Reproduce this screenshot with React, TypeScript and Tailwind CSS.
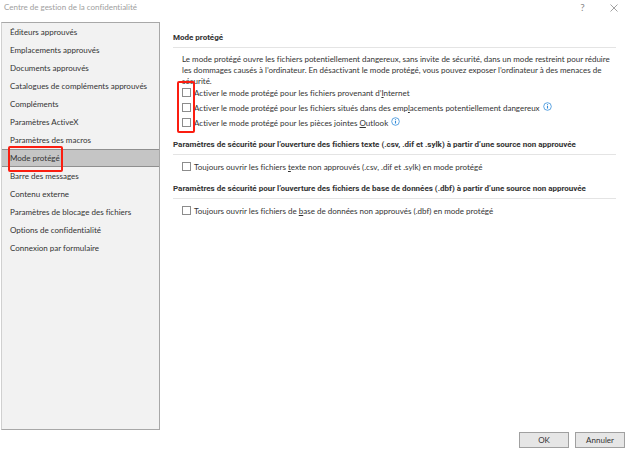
import React from 'react'

interface NavItem {
  id: string
  label: string
}

const navItems: NavItem[] = [
  { id: 'publishers', label: 'Éditeurs approuvés' },
  { id: 'locations', label: 'Emplacements approuvés' },
  { id: 'documents', label: 'Documents approuvés' },
  { id: 'catalogs', label: 'Catalogues de compléments approuvés' },
  { id: 'addins', label: 'Compléments' },
  { id: 'activex', label: 'Paramètres ActiveX' },
  { id: 'macros', label: 'Paramètres des macros' },
  { id: 'protected-view', label: 'Mode protégé' },
  { id: 'message-bar', label: 'Barre des messages' },
  { id: 'external', label: 'Contenu externe' },
  { id: 'file-block', label: 'Paramètres de blocage des fichiers' },
  { id: 'privacy', label: 'Options de confidentialité' },
  { id: 'form-login', label: 'Connexion par formulaire' },
]

const activeItem = 'protected-view'

const InfoIcon: React.FC = () => (
  <svg viewBox="0 0 18 18" className="mb-0.5 h-[9px] w-[9px] shrink-0" fill="none" stroke="#2b88d8" aria-hidden="true">
    <circle cx="9" cy="9" r="7.6" strokeWidth="1.5" />
    <path d="M9 8v5M9 4.6v2" strokeWidth="2.2" />
  </svg>
)

interface OptionProps {
  id: string
  info?: boolean
  children: React.ReactNode
}

/** Checkbox row with an underlined access key in its label */
const Option: React.FC<OptionProps> = ({ id, info, children }) => (
  <div className="flex h-[15px] items-center gap-[3px]">
    <input
      id={id}
      type="checkbox"
      className="h-[9px] w-[9px] shrink-0 appearance-none border border-[#8c8c8c] bg-white checked:bg-[#2b88d8]"
    />
    <label htmlFor={id} className="pt-0.5 leading-[11px]">
      {children}
    </label>
    {info && <InfoIcon />}
  </div>
)

const SectionHeading: React.FC<{ children: React.ReactNode }> = ({ children }) => (
  <h2 className="border-b border-[#e4e4e4] pb-0.5 font-['Roboto','Lato',sans-serif] leading-[14px] font-bold text-[#333]">
    {children}
  </h2>
)

export default function App() {
  return (
    <div className="flex min-h-screen flex-col bg-white font-['Lato','Open_Sans',sans-serif] text-[8px] text-[#333] [font-variant-ligatures:none]">
      {/* Title bar */}
      <header className="flex h-[22px] items-start justify-between pr-[10px] pl-1">
        <h1 className="pt-[1px] leading-[12px] text-[#a0a0a0]">Centre de gestion de la confidentialité</h1>
        <div className="flex items-center gap-5 pt-[2px] text-[#8a8a8a]">
          <button type="button" aria-label="Aide" className="flex h-[11px] w-[11px] items-center justify-center text-[10px] leading-[11px]">
            ?
          </button>
          <button type="button" aria-label="Fermer" className="flex h-[11px] w-[11px] items-center justify-center">
            <svg viewBox="0 0 8 8" className="h-2 w-2" stroke="currentColor" strokeWidth="0.8" aria-hidden="true">
              <path d="M0.5 0.5l7 7M7.5 0.5l-7 7" />
            </svg>
          </button>
        </div>
      </header>

      <div className="flex flex-1 pr-[13px] pl-[1px]">
        {/* Categories */}
        <nav className="w-[159px] shrink-0 border border-[#a8a8a8] border-l-[#d0d0d0] bg-[#f2f2f2]">
          <ul>
            {navItems.map((item) => (
              <li key={item.id} className="relative">
                {item.id === activeItem ? (
                  <button
                    type="button"
                    aria-current="page"
                    className="block h-[18px] w-full border-y border-[#8f8f8f] bg-[#c5c5c5] pl-2 text-left leading-[16px]"
                  >
                    {item.label}
                  </button>
                ) : (
                  <button type="button" className="block h-[18px] w-full pl-2 text-left leading-[18px]">
                    {item.label}
                  </button>
                )}
                {item.id === activeItem && (
                  <span className="pointer-events-none absolute -top-[3px] left-[6px] h-[26px] w-[55px] rounded-xs border-2 border-[#fb1d10]" />
                )}
              </li>
            ))}
          </ul>
        </nav>

        <main className="min-w-0 flex-1 pt-[9px] pl-[13px]">
          <section>
            <SectionHeading>Mode protégé</SectionHeading>
            <div className="pt-[6px] pl-[9px]">
              <p className="leading-[11px]">
                Le mode protégé ouvre les fichiers potentiellement dangereux, sans invite de sécurité, dans un mode
                restreint pour réduire les dommages causés à l’ordinateur. En désactivant le mode protégé, vous pouvez
                exposer l’ordinateur à des menaces de sécurité.
              </p>
              <div className="relative -mt-0.5">
                <Option id="internet">
                  Activer le mode protégé pour les fichiers provenant d’<u>I</u>nternet
                </Option>
                <Option id="unsafe-locations" info>
                  Activer le mode protégé pour les fichiers situés dans des emp<u>l</u>acements potentiellement
                  dangereux
                </Option>
                <Option id="outlook" info>
                  Activer le mode protégé pour les pièces jointes <u>O</u>utlook
                </Option>
                <span className="pointer-events-none absolute -top-[4px] -left-[5px] h-[52px] w-[18px] rounded-xs border-2 border-[#fb1d10]" />
              </div>
            </div>
          </section>

          <section className="pt-[8px]">
            <SectionHeading>
              Paramètres de sécurité pour l’ouverture des fichiers texte (.csv, .dif et .sylk) à partir d’une source non
              approuvée
            </SectionHeading>
            <div className="pt-[4px] pl-[9px]">
              <Option id="text-files">
                Toujours ouvrir les fichiers <u>t</u>exte non approuvés (.csv, .dif et .sylk) en mode protégé
              </Option>
            </div>
          </section>

          <section className="pt-[8px]">
            <SectionHeading>
              Paramètres de sécurité pour l’ouverture des fichiers de base de données (.dbf) à partir d’une source non
              approuvée
            </SectionHeading>
            <div className="pt-[4px] pl-[9px]">
              <Option id="database-files">
                Toujours ouvrir les fichiers de <u>b</u>ase de données non approuvés (.dbf) en mode protégé
              </Option>
            </div>
          </section>
        </main>
      </div>

      <footer className="flex justify-end gap-[6px] pt-[2px] pr-1 pb-[2px]">
        <button type="button" className="h-4 w-[50px] border border-[#a0a0a0] bg-[#e6e6e6] leading-[14px]">
          OK
        </button>
        <button type="button" className="h-4 w-[50px] border border-[#a0a0a0] bg-[#e6e6e6] leading-[14px]">
          Annuler
        </button>
      </footer>
    </div>
  )
}
